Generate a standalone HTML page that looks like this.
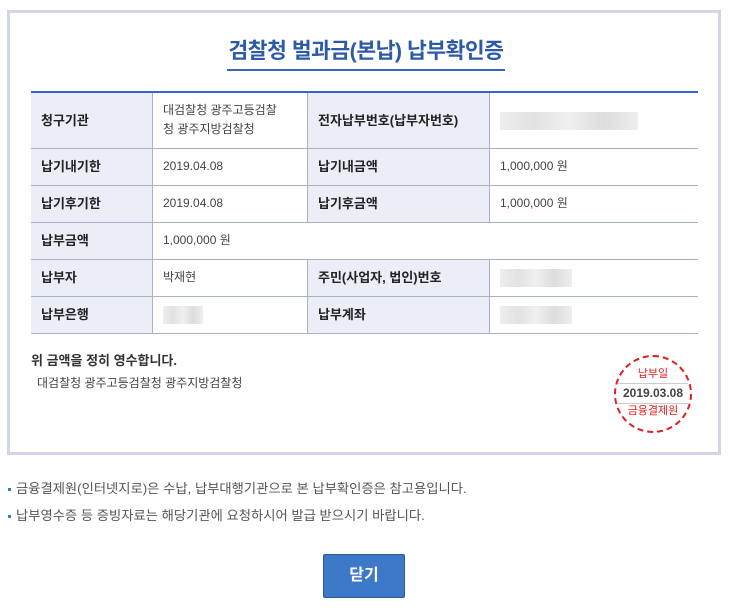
<!DOCTYPE html>
<html><head><meta charset="utf-8"><style>
body{margin:0;width:734px;height:612px;background:#fff;font-family:"Liberation Sans","Noto Sans CJK KR",sans-serif;color:#333;position:relative;overflow:hidden}
.box{position:absolute;left:7px;top:10px;width:708px;height:439px;border:3px solid #d0d7e2;background:#fff}
.title{position:absolute;left:222px;top:37px;width:288px;text-align:center;font-size:21.5px;font-weight:bold;color:#2c5aa8;letter-spacing:-0.5px;line-height:28px;white-space:nowrap}
.ul{position:absolute;left:227px;top:69px;width:278px;height:2px;background:#3a66b5}
table{position:absolute;left:31px;top:91px;width:667px;border-collapse:collapse;border-top:2px solid #3366cc;font-size:12px}
td{border-bottom:1px solid #a9b3c5;border-left:1px solid #a9b3c5;padding:0 0 0 10px;color:#444;line-height:19px}
td:first-child{border-left:none}
td.h{background:#ebeef7;font-size:13px;font-weight:bold;color:#222}
.blur{display:inline-block;height:18px;background:linear-gradient(90deg,#eee,#e2e2e2,#f0f0f0,#ddd,#eee);vertical-align:middle}
.stamp{position:absolute;left:614px;top:355px;width:74px;height:74px;border:2.5px dashed #e02020;border-radius:50%;text-align:center;font-size:11px;color:#e02020}
.b{position:absolute;left:8px;font-size:13.3px;color:#555;white-space:nowrap}
.b:before{content:"";display:inline-block;width:3px;height:3px;background:#3d77c7;margin-right:5px;vertical-align:middle}
.btn{position:absolute;left:323px;top:554px;width:80px;height:42px;background:#3e78c9;border:1px solid #2a5a9c;border-radius:2px;color:#fff;font-size:16px;font-weight:bold;text-align:center;line-height:42px}
</style></head><body>
<div class="box"></div>
<div class="title">검찰청 벌과금(본납) 납부확인증</div>
<div class="ul"></div>
<table>
<tr style="height:56px"><td class="h" style="width:111px">청구기관</td><td style="width:144px">대검찰청 광주고등검찰<br>청 광주지방검찰청</td><td class="h" style="width:171px">전자납부번호(납부자번호)</td><td><span class="blur" style="width:138px"></span></td></tr>
<tr style="height:37px"><td class="h">납기내기한</td><td>2019.04.08</td><td class="h">납기내금액</td><td>1,000,000 원</td></tr>
<tr style="height:37px"><td class="h">납기후기한</td><td>2019.04.08</td><td class="h">납기후금액</td><td>1,000,000 원</td></tr>
<tr style="height:37px"><td class="h">납부금액</td><td colspan="3">1,000,000 원</td></tr>
<tr style="height:37px"><td class="h">납부자</td><td>박재현</td><td class="h">주민(사업자, 법인)번호</td><td><span class="blur" style="width:72px"></span></td></tr>
<tr style="height:37px"><td class="h">납부은행</td><td><span class="blur" style="width:40px"></span></td><td class="h">납부계좌</td><td><span class="blur" style="width:72px"></span></td></tr>
</table>
<div style="position:absolute;left:31px;top:350px;font-size:13px;font-weight:bold;color:#333">위 금액을 정히 영수합니다.</div>
<div style="position:absolute;left:37px;top:374px;font-size:12px;color:#444">대검찰청 광주고등검찰청 광주지방검찰청</div>
<div class="stamp"><div style="margin-top:10px;line-height:14px">납부일</div><div style="border-top:1px solid #ccc;border-bottom:1px solid #ccc;margin:2px 2px 0;color:#444;font-size:12px;line-height:19px;font-weight:bold">2019.03.08</div><div style="line-height:15px">금융결제원</div></div>
<div class="b" style="top:478px">금융결제원(인터넷지로)은 수납, 납부대행기관으로 본 납부확인증은 참고용입니다.</div>
<div class="b" style="top:505px">납부영수증 등 증빙자료는 해당기관에 요청하시어 발급 받으시기 바랍니다.</div>
<div class="btn">닫기</div>
</body></html>
